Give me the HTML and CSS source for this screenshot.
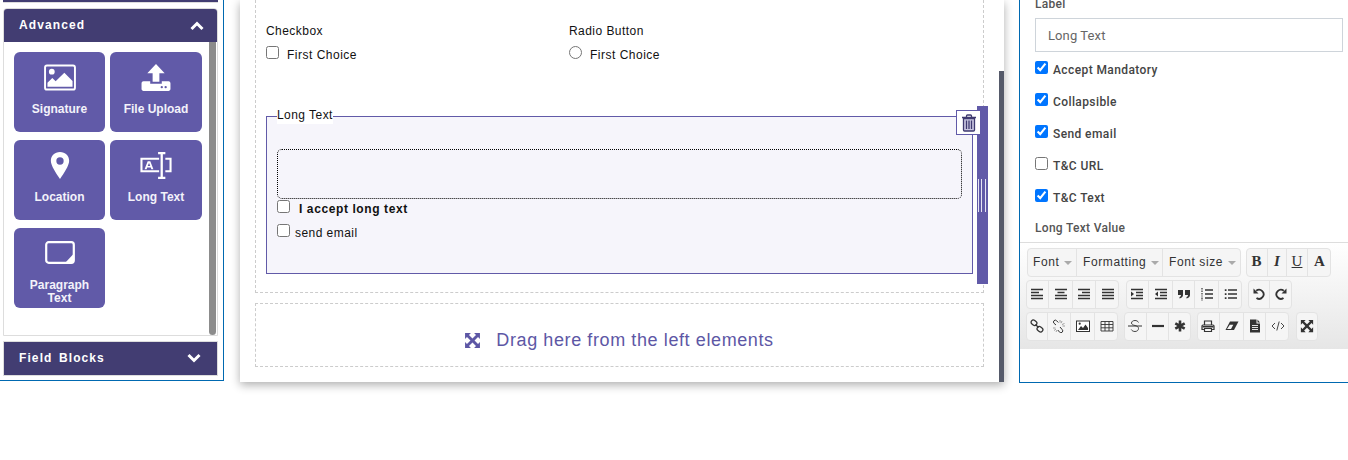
FILE: index.html
```html
<!DOCTYPE html>
<html lang="en">

<head>
  <meta charset="utf-8" />
  <meta name="viewport" content="width=device-width, initial-scale=1" />
  <title>Form builder</title>
  <link rel="stylesheet" href="styles.css">
</head>

<body>
  <svg class="sprite" xmlns="http://www.w3.org/2000/svg">
    <symbol id="i-left" viewBox="0 0 14 14"><path d="M1 2.5h12M1 5.5h8M1 8.5h12M1 11.5h12" stroke="currentColor" stroke-width="1.5"/></symbol>
    <symbol id="i-center" viewBox="0 0 14 14"><path d="M1 2.5h12M3.5 5.5h7M1 8.5h12M1 11.5h12" stroke="currentColor" stroke-width="1.5"/></symbol>
    <symbol id="i-right" viewBox="0 0 14 14"><path d="M1 2.5h12M5 5.5h8M1 8.5h12M1 11.5h12" stroke="currentColor" stroke-width="1.5"/></symbol>
    <symbol id="i-justify" viewBox="0 0 14 14"><path d="M1 2.5h12M1 5.5h12M1 8.5h12M1 11.5h12" stroke="currentColor" stroke-width="1.5"/></symbol>
    <symbol id="i-indent" viewBox="0 0 14 14"><path d="M1 2.5h12M6 5.5h7M6 8.5h7M1 11.5h12" stroke="currentColor" stroke-width="1.4"/><path d="M1 4.5l3 2.5-3 2.500z" fill="currentColor"/></symbol>
    <symbol id="i-outdent" viewBox="0 0 14 14"><path d="M1 2.5h12M6 5.5h7M6 8.5h7M1 11.5h12" stroke="currentColor" stroke-width="1.4"/><path d="M4 4.500l-3 2.500 3 2.500z" fill="currentColor"/></symbol>
    <symbol id="i-quote" viewBox="0 0 14 14"><path d="M1 3h5v5c0 2-1.500 3-3.500 3.500V10c1-.3 1.500-.8 1.500-2H1zM8 3h5v5c0 2-1.500 3-3.500 3.500V10c1-.3 1.500-.8 1.500-2H8z" fill="currentColor"/></symbol>
    <symbol id="i-ol" viewBox="0 0 14 14"><path d="M5 3h8M5 7h8M5 11h8" stroke="currentColor" stroke-width="1.4"/><path d="M1 1.500h2M1 3h2M1 4.500h2M1 6.500h2M1 8h2M1 10h2M1 11.500h2M1 13h2" stroke="currentColor" stroke-width=".6"/></symbol>
    <symbol id="i-ul" viewBox="0 0 14 14"><path d="M4 3h9M4 7h9M4 11h9" stroke="currentColor" stroke-width="1.500"/><path d="M.8 2.200h1.700v1.700H.8zM.8 6.200h1.700v1.700H.8zM.8 10.200h1.700v1.700H.8z" fill="currentColor"/></symbol>
    <symbol id="i-undo" viewBox="0 0 14 14"><path d="M4.200 3.800A4.500 4.500 0 1 1 4.500 11" fill="none" stroke="currentColor" stroke-width="1.800"/><path d="M1.500 1.500v5h5z" fill="currentColor"/></symbol>
    <symbol id="i-redo" viewBox="0 0 14 14"><path d="M9.800 3.800A4.500 4.500 0 1 0 9.500 11" fill="none" stroke="currentColor" stroke-width="1.800"/><path d="M12.500 1.500v5h-5z" fill="currentColor"/></symbol>
    <symbol id="i-link" viewBox="0 0 14 14"><g fill="none" stroke="currentColor" stroke-width="1.300"><rect x="1" y="1.500" width="6" height="4.500" rx="2.200" transform="rotate(38 4 3.700)"/><rect x="7" y="8" width="6" height="4.500" rx="2.200" transform="rotate(38 10 10.200)"/></g><path d="M5.500 5.500l3 3" stroke="currentColor" stroke-width="1.200"/></symbol>
    <symbol id="i-unlink" viewBox="0 0 14 14"><g fill="none" stroke="currentColor" stroke-width="1"><path d="M4 6L2 4.300a1.800 1.800 0 0 1 2.600-2.600L6.300 3.500M8 8l2.200 2.600a1.800 1.800 0 0 1-2.600 2.600L5.800 11"/></g><path d="M8 1v2.500M10 2l-1 2.200M12.500 4.500L10 5.500M13 7h-2.500M1 9h2.500M2 11.500l2-1.500M4 13l1-2" stroke="#888" stroke-width=".8"/></symbol>
    <symbol id="i-image" viewBox="0 0 14 14"><rect x=".5" y="2" width="13" height="10.500" fill="#fff" stroke="currentColor"/><path d="M2 11l3-4 2 2 2.500-3.500L12 9v2z" fill="currentColor"/><circle cx="3.700" cy="4.700" r="1.100" fill="currentColor"/></symbol>
    <symbol id="i-table" viewBox="0 0 14 14"><path d="M1 2.500h12v9.500H1zM1 5.500h12M1 8.800h12M5 2.500V12M9 2.500V12" fill="none" stroke="currentColor" stroke-width=".9"/></symbol>
    <symbol id="i-strike" viewBox="0 0 14 14"><path d="M10.500 3.500C9.800 2 8.500 1.500 7 1.500c-2 0-3.500 1-3.500 2.500S5 6 7 6.500s3.500 1.300 3.500 3-1.500 3-3.500 3c-1.700 0-3-.7-3.700-2" fill="none" stroke="currentColor" stroke-width=".9"/><path d="M0 7h14" stroke="currentColor"/></symbol>
    <symbol id="i-rule" viewBox="0 0 14 14"><path d="M1 7h12" stroke="currentColor" stroke-width="2.200"/></symbol>
    <symbol id="i-asterisk" viewBox="0 0 14 14"><path d="M7 1.500v11M2.300 4.300l9.400 5.400M11.700 4.300l-9.400 5.400" stroke="currentColor" stroke-width="2.600"/></symbol>
    <symbol id="i-print" viewBox="0 0 14 14"><path d="M3.500 6V2h7v4M3.500 10.500h-2.500V7c0-.6.500-1 1-1h10c.5 0 1 .4 1 1v3.500h-2.500M3.500 9.500h7v3h-7z" fill="none" stroke="currentColor" stroke-width="1.200"/><path d="M1.500 7h11v1.500h-11z" fill="currentColor"/></symbol>
    <symbol id="i-eraser" viewBox="0 0 14 14"><path d="M5 2.500h8.500L9 11H.5z" fill="currentColor"/><path d="M2 10l2.800-4.300h3.500L6 10z" fill="#f5f5f5"/></symbol>
    <symbol id="i-file" viewBox="0 0 14 14"><path d="M2 .5h6.500v4H12V13.500H2zM9.500 .5l2.500 3H9.500z" fill="currentColor"/><path d="M4 6.500h6M4 8.500h6M4 10.500h6" stroke="#f5f5f5" stroke-width=".9"/></symbol>
    <symbol id="i-code" viewBox="0 0 14 14"><path d="M4 4L1 7l3 3M10 4l3 3-3 3M8.200 2.500l-2.400 9" fill="none" stroke="currentColor" stroke-width=".9"/></symbol>
    <symbol id="i-expand" viewBox="0 0 16 16"><path d="M1 1h5.500L4.700 2.800 8 6.100l3.300-3.300L9.500 1H15v5.500l-1.800-1.800L9.900 8l3.300 3.300 1.800-1.800V15H9.500l1.800-1.800L8 9.900l-3.300 3.300L6.500 15H1V9.500l1.800 1.800L6.100 8 2.800 4.700 1 6.500z" fill="currentColor"/></symbol>
  </svg>

  <div class="page">
    <aside class="sidebar">
      <div class="acc-stub"></div>

      <section class="acc">
        <header class="acc-head">
          <span>Advanced</span>
          <svg class="chevron" viewBox="0 0 14 10"><path d="M1.500 8L7 2.500 12.500 8" fill="none" stroke="#fff" stroke-width="3"/></svg>
        </header>
        <div class="acc-body">
          <div class="tools">
            <div class="tool">
              <svg class="tool-icon" viewBox="0 0 34 28"><rect x="1.500" y="1.500" width="31" height="25" rx="2" fill="none" stroke="#fff" stroke-width="2"/><circle cx="8.500" cy="8" r="3" fill="#fff"/><path d="M4 23.500v-4l5-5 3.500 3.500 9-9 8.500 8.500v6z" fill="#fff"/></svg>
              <span>Signature</span>
            </div>
            <div class="tool">
              <svg class="tool-icon" viewBox="0 0 30 28"><path d="M15 0l9 9.500h-5.500v9h-7v-9H6z" fill="#fff"/><path d="M2 18h7v2.500h12V18h7c1 0 2 1 2 2v6c0 1-1 2-2 2H2c-1 0-2-1-2-2v-6c0-1 1-2 2-2z" fill="#fff"/><circle cx="21" cy="24" r="1.200" fill="#615aa8"/><circle cx="25" cy="24" r="1.200" fill="#615aa8"/></svg>
              <span>File Upload</span>
            </div>
            <div class="tool">
              <svg class="tool-icon" viewBox="0 0 20 28"><path fill-rule="evenodd" d="M10 0c5.500 0 9.500 4 9.500 9 0 5-5.500 13-9.500 19C6 22 .5 14 .5 9 .500 4 4.500 0 10 0zm0 5.500a3.800 3.800 0 1 0 0 7.600 3.800 3.800 0 0 0 0-7.600z" fill="#fff"/></svg>
              <span>Location</span>
            </div>
            <div class="tool">
              <svg class="tool-icon" viewBox="0 0 30 26"><path d="M18 6.500H1v12h17M24 6.500h5v12h-5" fill="none" stroke="#fff" stroke-width="2"/><path d="M17 1h7M17 25h7M20.500 1v24" stroke="#fff" stroke-width="2.200"/><path d="M4 16.500l3-7.500h2.500l3 7.500h-2l-.5-1.500H6.500L6 16.500zM7 13.500h2.500L8.300 10.500z" fill="#fff"/></svg>
              <span>Long Text</span>
            </div>
            <div class="tool">
              <svg class="tool-icon tool-icon-sm" viewBox="0 0 30 23"><rect x="1.200" y="1.200" width="27.600" height="20.600" rx="2.500" fill="none" stroke="#fff" stroke-width="2.200"/><path d="M28 13.500V22h-8z" fill="#fff"/></svg>
              <span>Paragraph<br>Text</span>
            </div>
          </div>
          <div class="side-scroll"></div>
        </div>
      </section>

      <section class="acc acc-closed">
        <header class="acc-head">
          <span>Field Blocks</span>
          <svg class="chevron" viewBox="0 0 14 10"><path d="M1.500 2L7 7.500 12.500 2" fill="none" stroke="#fff" stroke-width="3"/></svg>
        </header>
      </section>
    </aside>

    <main class="canvas">
      <div class="drop-box drop-form">
        <div class="choice-row">
          <div class="choice-col">
            <div class="choice-title">Checkbox</div>
            <label class="choice"><input type="checkbox">First Choice</label>
          </div>
          <div class="choice-col">
            <div class="choice-title">Radio Button</div>
            <label class="choice"><input type="radio">First Choice</label>
          </div>
        </div>

        <div class="long-text">
          <fieldset class="long-box">
            <legend>Long Text</legend>
            <div class="long-area"></div>
            <label class="long-check long-accept"><input type="checkbox">I accept long text</label>
            <label class="long-check"><input type="checkbox">send email</label>
          </fieldset>
          <div class="handle"><div class="grip"></div></div>
          <div class="trash">
            <svg viewBox="0 0 16 18" width="16" height="18"><path d="M1 3.500h14M5.500 3.500V2c0-.6.400-1 1-1h3c.6 0 1 .4 1 1v1.500" fill="none" stroke="#3f3a70" stroke-width="1.300"/><path d="M2.500 4.500h11V16c0 .6-.4 1-1 1h-9c-.6 0-1-.4-1-1z" fill="#c9c6e0" stroke="#3f3a70" stroke-width="1.300"/><path d="M5.500 6.500v8.500M8 6.500v8.500M10.500 6.500v8.500" stroke="#3f3a70" stroke-width="1.300"/></svg>
          </div>
        </div>
      </div>

      <div class="drop-box drop-hint">
        <svg viewBox="0 0 16 16" width="17" height="17"><use href="#i-expand"/></svg>
        <span>Drag here from the left elements</span>
      </div>

      <div class="canvas-scroll"></div>
    </main>

    <aside class="props">
      <div class="props-form">
        <div class="prop-label">Label</div>
        <input class="prop-input" type="text" value="Long Text">
        <label class="prop-check"><input type="checkbox" checked>Accept Mandatory</label>
        <label class="prop-check"><input type="checkbox" checked>Collapsible</label>
        <label class="prop-check"><input type="checkbox" checked>Send email</label>
        <label class="prop-check"><input type="checkbox">T&amp;C URL</label>
        <label class="prop-check"><input type="checkbox" checked>T&amp;C Text</label>
        <div class="prop-label prop-value">Long Text Value</div>
      </div>

      <div class="toolbar">
        <div class="tb-row tb-first">
          <div class="tb-group">
            <div class="tb-btn tb-drop w50">Font<i class="caret"></i></div>
            <div class="tb-btn tb-drop w86">Formatting<i class="caret"></i></div>
            <div class="tb-btn tb-drop w78">Font size<i class="caret"></i></div>
          </div>
          <div class="tb-group tb-type">
            <div class="tb-btn w22"><b>B</b></div>
            <div class="tb-btn w19"><b><i>I</i></b></div>
            <div class="tb-btn w21"><u>U</u></div>
            <div class="tb-btn w23"><b>A</b></div>
          </div>
        </div>
        <div class="tb-row">
          <div class="tb-group">
            <div class="tb-btn w23"><svg><use href="#i-left"/></svg></div>
            <div class="tb-btn w24"><svg><use href="#i-center"/></svg></div>
            <div class="tb-btn w23"><svg><use href="#i-right"/></svg></div>
            <div class="tb-btn w23"><svg><use href="#i-justify"/></svg></div>
          </div>
          <div class="tb-group gap7">
            <div class="tb-btn w23"><svg><use href="#i-indent"/></svg></div>
            <div class="tb-btn w24"><svg><use href="#i-outdent"/></svg></div>
            <div class="tb-btn w22"><svg><use href="#i-quote"/></svg></div>
            <div class="tb-btn w24"><svg><use href="#i-ol"/></svg></div>
            <div class="tb-btn w23"><svg><use href="#i-ul"/></svg></div>
          </div>
          <div class="tb-group">
            <div class="tb-btn w22"><svg><use href="#i-undo"/></svg></div>
            <div class="tb-btn w22"><svg><use href="#i-redo"/></svg></div>
          </div>
        </div>
        <div class="tb-row">
          <div class="tb-group">
            <div class="tb-btn w22"><svg><use href="#i-link"/></svg></div>
            <div class="tb-btn w23"><svg><use href="#i-unlink"/></svg></div>
            <div class="tb-btn w24"><svg><use href="#i-image"/></svg></div>
            <div class="tb-btn w23"><svg><use href="#i-table"/></svg></div>
          </div>
          <div class="tb-group">
            <div class="tb-btn w23"><svg><use href="#i-strike"/></svg></div>
            <div class="tb-btn w22"><svg><use href="#i-rule"/></svg></div>
            <div class="tb-btn w22"><svg><use href="#i-asterisk"/></svg></div>
          </div>
          <div class="tb-group">
            <div class="tb-btn w23"><svg><use href="#i-print"/></svg></div>
            <div class="tb-btn w24"><svg><use href="#i-eraser"/></svg></div>
            <div class="tb-btn w22"><svg><use href="#i-file"/></svg></div>
            <div class="tb-btn w23"><svg><use href="#i-code"/></svg></div>
          </div>
          <div class="tb-group gap7">
            <div class="tb-btn w22"><svg><use href="#i-expand"/></svg></div>
          </div>
        </div>
      </div>
    </aside>
  </div>
</body>

</html>
```

FILE: styles.css
```css
html,
body {
  margin: 0;
  padding: 0;
  height: 460px;
  overflow: hidden;
  background-color: #fff;
  font-family: "Liberation Sans", Arial, sans-serif;
  font-size: 12px;
  color: #000;
}

.sprite {
  display: none;
}

.page {
  display: flex;
  align-items: flex-start;
}

/* left column */
.sidebar {
  box-sizing: border-box;
  width: 224px;
  height: 381px;
  padding: 0 5px 0 3px;
  border-right: 1px solid #0069b1;
  border-bottom: 1px solid #0069b1;
}

.acc-stub {
  height: 2px;
  margin-bottom: 5px;
  background-color: #423d72;
  border-bottom: 1px solid #ddd;
  box-sizing: content-box;
}

.acc {
  border: 1px solid #ddd;
  border-radius: 4px 4px 0 0;
}

.acc-closed {
  margin-top: 5px;
  border-radius: 0;
}

.acc-head {
  display: flex;
  align-items: center;
  justify-content: space-between;
  box-sizing: border-box;
  height: 33px;
  padding: 0 13px 2px 15px;
  background-color: #423d72;
  color: #fff;
  font-size: 12px;
  font-weight: bold;
  letter-spacing: 1.1px;
  word-spacing: 2px;
  border-radius: 3px 3px 0 0;
}

.acc-closed .acc-head {
  border-radius: 0;
  padding-right: 16px;
}

.chevron {
  width: 14px;
  height: 10px;
  margin-top: 3px;
}

.acc-closed .chevron {
  margin-top: 0;
}

.acc-body {
  display: flex;
  justify-content: space-between;
  height: 293px;
  background-color: #fff;
}

.tools {
  display: grid;
  grid-template-columns: 91px 92px;
  grid-auto-rows: 80px;
  align-content: start;
  gap: 8px 5px;
  padding: 10px 0 0 10px;
}

.tool {
  display: flex;
  flex-direction: column;
  align-items: center;
  border-radius: 6px;
  background-color: #615aa8;
  font-size: 12px;
  font-weight: bold;
  line-height: 13px;
  text-align: center;
  color: #f3f2fa;
}

.tool-icon {
  height: 27px;
  width: 34px;
  margin: 12px 0 12px;
}

.tool-icon-sm {
  width: 30px;
  height: 23px;
  margin: 13px 0 15px;
}

.side-scroll {
  width: 7px;
  height: 293px;
  margin-right: 1px;
  border-radius: 0 0 4px 4px;
  background-color: #8c8c8c;
}

/* middle column */
.canvas {
  position: relative;
  box-sizing: border-box;
  width: 764px;
  height: 382px;
  margin-left: 16px;
  padding: 0 20px 0 15px;
  background-color: #fff;
  box-shadow: 0 3px 9px rgba(0, 0, 0, 0.32);
}

.canvas-scroll {
  position: absolute;
  top: 71px;
  right: 0;
  bottom: 0;
  width: 5px;
  background-color: #555a6a;
}

.drop-box {
  box-sizing: border-box;
  width: 729px;
  border: 1px dashed #ccc;
}

.drop-form {
  height: 303px;
  margin-top: -10px;
  padding: 33px 0 0 10px;
}

.choice-row {
  display: flex;
  height: 76px;
}

.choice-col {
  width: 303px;
}

.choice-title {
  line-height: 14px;
  letter-spacing: 0.45px;
  color: #111;
}

.choice {
  display: flex;
  align-items: center;
  height: 16px;
  margin-top: 9px;
  letter-spacing: 0.5px;
  color: #111;
}

.choice input {
  margin: 0 8px 5px 0;
}

.long-text {
  position: relative;
  box-sizing: border-box;
  width: 722px;
  height: 178px;
  margin-top: 6px;
  padding-top: 2px;
}

.long-box {
  box-sizing: border-box;
  width: 707px;
  height: 166px;
  margin: 0;
  padding: 0 10px;
  border: 1px solid #615aa8;
  background-color: #f6f5fb;
}

.long-box legend {
  padding: 0 0 2px;
  background-color: #fff;
  line-height: 14px;
  letter-spacing: 0.45px;
  color: #111;
}

.long-area {
  box-sizing: border-box;
  height: 50px;
  margin-top: 25px;
  border: 1px dotted #000;
  border-radius: 5px;
}

.long-check {
  display: flex;
  align-items: center;
  height: 16px;
  margin-top: 8px;
  letter-spacing: 0.45px;
  color: #111;
}

.long-check input {
  margin: 0 5px 5px 0;
}

.long-accept {
  margin-top: 2px;
  font-weight: bold;
  letter-spacing: 0.6px;
}

.long-accept input {
  margin-right: 9px;
}

.handle {
  position: absolute;
  top: 0;
  right: 0;
  width: 11px;
  height: 178px;
  background-color: #615aa8;
}

.grip {
  position: relative;
  box-sizing: border-box;
  width: 8px;
  height: 33px;
  margin: 73px 0 0 1px;
  border-left: 1px solid #e6e5f3;
  border-right: 1px solid #e6e5f3;
}

.grip::after {
  content: "";
  position: absolute;
  top: 0;
  bottom: 0;
  left: 2px;
  width: 1px;
  background-color: #e6e5f3;
}

.trash {
  position: absolute;
  top: 4px;
  right: 7px;
  box-sizing: border-box;
  display: flex;
  align-items: center;
  justify-content: center;
  width: 25px;
  height: 25px;
  background-color: #fff;
  border: 1px solid #615aa8;
}

.drop-hint {
  display: flex;
  align-items: center;
  justify-content: center;
  gap: 15px;
  height: 64px;
  margin-top: 10px;
  padding: 10px 1px 0 0;
  color: #5d57a5;
  font-size: 18px;
  letter-spacing: 0.6px;
}

/* right column */
.props {
  box-sizing: border-box;
  flex: 1;
  height: 383px;
  margin-left: 15px;
  border-left: 1px solid #0069b1;
  border-bottom: 1px solid #0069b1;
  font-family: Roboto, "Liberation Sans", sans-serif;
}

.props-form {
  height: 242px;
  padding: 0 5px 0 15px;
  overflow: hidden;
}

.prop-label {
  margin-top: -3px;
  line-height: 14px;
  font-weight: 500;
  color: #555;
  letter-spacing: 0.3px;
}

.prop-input {
  display: block;
  box-sizing: border-box;
  width: 308px;
  height: 34px;
  margin-top: 7px;
  padding: 0 12px;
  border: 1px solid #ced4da;
  font-family: Roboto, "Liberation Sans", sans-serif;
  font-size: 13px;
  color: #666;
  letter-spacing: 0.1px;
}

.prop-check {
  display: flex;
  align-items: center;
  height: 32px;
  font-weight: 500;
  color: #444;
  letter-spacing: 0.4px;
}

.prop-check input {
  margin: 0 5px 6px 0;
}

.prop-check:first-of-type {
  margin-top: 2px;
}

.prop-value {
  margin-top: 7px;
}

.toolbar {
  display: flex;
  flex-direction: column;
  gap: 3px;
  height: 107px;
  box-sizing: border-box;
  padding: 5px 0 0 6px;
  border-top: 1px solid #ddd;
  background-image: linear-gradient(#fff, #e6e6e6);
  font-family: "Liberation Sans", Arial, sans-serif;
  color: #333;
}

.tb-row {
  display: flex;
  gap: 6px;
  height: 29px;
}

.tb-first {
  gap: 5px;
  margin-left: 1px;
}

.gap7 {
  margin-left: 1px;
}

.tb-group {
  display: flex;
  box-sizing: border-box;
  height: 29px;
  border: 1px solid #e3e3e3;
  border-radius: 4px;
  background-color: #f5f5f5;
}

.tb-btn {
  display: flex;
  align-items: center;
  justify-content: center;
  box-sizing: border-box;
  padding-bottom: 2px;
  border-right: 1px solid #e3e3e3;
}

.tb-btn:first-child {
  margin-left: -1px;
}

.tb-btn:last-child {
  margin-right: -1px;
  border-right: 0;
}

.tb-btn svg {
  width: 14px;
  height: 14px;
}

.tb-drop {
  justify-content: flex-start;
  padding-left: 6px;
  gap: 5px;
  letter-spacing: 0.6px;
}

.caret {
  width: 0;
  height: 0;
  margin-top: 2px;
  border-left: 4px solid transparent;
  border-right: 4px solid transparent;
  border-top: 4px solid #aaa;
}

.tb-type {
  font-family: "Liberation Serif", serif;
  font-size: 15px;
}

.w19 { width: 19px; }
.w21 { width: 21px; }
.w22 { width: 22px; }
.w23 { width: 23px; }
.w24 { width: 24px; }
.w50 { width: 50px; }
.w78 { width: 78px; }
.w86 { width: 86px; }
```
